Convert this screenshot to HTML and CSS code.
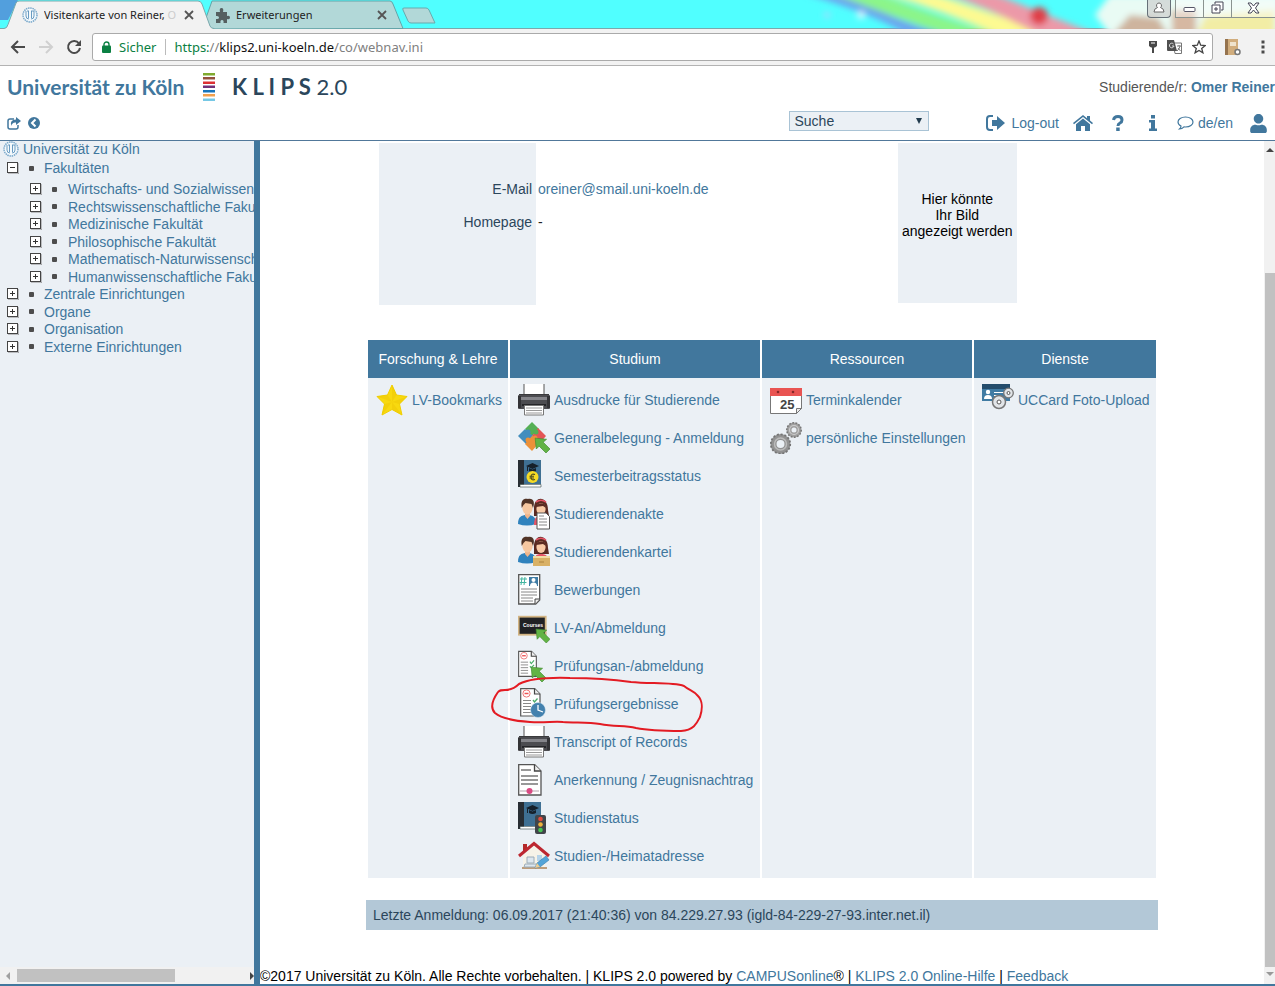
FILE: index.html
```html
<!DOCTYPE html>
<html lang="de">
<head>
<meta charset="utf-8">
<title>Visitenkarte von Reiner</title>
<link rel="stylesheet" href="styles.css">
</head>
<body>
<svg class="defs" aria-hidden="true">
  <defs>
    <symbol id="printer" viewBox="0 0 32 32">
      <path d="M6 11V0h20v11" fill="#fff"/>
      <path d="M6 11V0M26 0v11" stroke="#555" stroke-width="1"/>
      <path d="M1 10h30v3H1z" fill="#3a3a3c"/>
      <rect x="0" y="11" width="32" height="14" rx="1" fill="#4c4c50"/>
      <path d="M0 12h3v12H0zM29 12h3v12h-3z" fill="#333336"/>
      <path d="M3 13h26v3H3z" fill="#85858a"/>
      <path d="M4 20h24v2H4z" fill="#252528"/>
      <path d="M6.500 21.500h19v9.500h-19z" fill="#fff" stroke="#777"/>
      <path d="M8 24h16M8 26.500h16M8 29h16" stroke="#999" stroke-width="1"/>
    </symbol>
    <symbol id="arrow" viewBox="0 0 14 14">
      <path d="M1 1l10 1-3 2.500 6 6L10.500 14l-6-6L2 10.500z" fill="#62b345" stroke="#438c32" stroke-width=".6"/>
    </symbol>
    <symbol id="book" viewBox="0 0 24 28">
      <path d="M0 0h23v24H5v3H0z" fill="#3f7093"/>
      <path d="M0 0h6v27H0z" fill="#272d33"/>
      <path d="M2 24.500h21V27H2z" fill="#fff" stroke="#344"  stroke-width=".6"/>
      <path d="M8 6l6.500-3L21 6l-6.500 3z" fill="#16202a"/>
      <path d="M11 8v3q3.500 2 7 0V8l-3.500 1.500zM9 6.500h1V11H9z" fill="#16202a"/>
    </symbol>
    <symbol id="couple" viewBox="0 0 32 32">
      <path d="M0 26c0-7 3-9 9-9s9 2 9 9q-9 3-18 0z" fill="#2f82bd"/>
      <path d="M7 14h5v4l-2.500 3L7 18z" fill="#eeb58c"/>
      <ellipse cx="9.500" cy="10" rx="5.200" ry="6.500" fill="#f6c7a0"/>
      <path d="M3.800 10C2 1 7 0 10 1c6-1 7 4 5 9l-1.500-4-6-1-2 2z" fill="#503326"/>
      <path d="M16 12c-1-15 14-15 14 0l1 6H16z" fill="#5a2b22"/>
      <path d="M16 27c0-7 2-9 7-9s8 2 8 9z" fill="#e45466"/>
      <ellipse cx="23" cy="11" rx="4.600" ry="6" fill="#f8caa6"/>
      <path d="M18 9c1-4 9-6 10 1l-3-2z" fill="#5a2b22"/>
      <path d="M18 4q5-3.500 10 0" fill="none" stroke="#e45466" stroke-width="1.600"/>
    </symbol>
    <symbol id="exam" viewBox="0 0 24 29">
      <path d="M.7.700h14L20 6v22H.700z" fill="#fff" stroke="#555" stroke-width="1.200"/>
      <path d="M14.500.700V6H20" fill="#eee" stroke="#444" stroke-width="1.200"/>
      <circle cx="6.500" cy="5.500" r="3.600" fill="#fff" stroke="#ee7777"/>
      <path d="M4.500 5.500h4" stroke="#e55" stroke-width="1.500"/>
      <path d="M3 12.500h8M3 15.500h8M3 18.500h8M3 21.500h8M3 24.500h8" stroke="#888"/>
      <path d="M13 12l1.500 2 3-3.500M13 17l1.500 1.500 3-3" fill="none" stroke="#4cae6b" stroke-width="1.300"/>
    </symbol>
    <symbol id="seal" viewBox="0 0 16 16">
      <circle cx="8" cy="8" r="7" fill="#f4f9fc" stroke="#79a8cb" stroke-width="1.500" stroke-dasharray="1.500 .7"/>
      <path d="M4 4v5q0 3 3 3M6.500 4v7M9.500 4v7M12 4v5q0 3-3 3M5 4h2M9 4h3" fill="none" stroke="#5a91bb" stroke-width=".9"/>
    </symbol>
    <symbol id="plus" viewBox="0 0 12 12">
      <path d="M1 12h11V1" fill="none" stroke="#888"/>
      <rect x=".5" y=".5" width="10" height="10" fill="#fff" stroke="#444"/>
      <path d="M3 5.500h5M5.500 3v5" stroke="#333"/>
    </symbol>
    <symbol id="minus" viewBox="0 0 12 12">
      <path d="M1 12h11V1" fill="none" stroke="#888"/>
      <rect x=".5" y=".5" width="10" height="10" fill="#fff" stroke="#444"/>
      <path d="M3 5.500h5" stroke="#333"/>
    </symbol>
    <symbol id="close" viewBox="0 0 10 10"><path d="M1 1l8 8M9 1L1 9" stroke="#555" stroke-width="1.800"/></symbol>
    <filter id="soft"><feGaussianBlur stdDeviation="3"/></filter>
  </defs>
</svg>

<div class="tabstrip">
  <svg class="wallpaper" viewBox="0 0 515 29" width="515" height="29" aria-hidden="true">
    <g filter="url(#soft)">
      <path d="M45-6h45q40 26 100 42h-40Q110 12 45-6z" fill="#6da2ee"/>
      <path d="M75-6h45q50 20 120 42h-50Q130 16 75-6z" fill="#8cf589"/>
      <path d="M125-6h50q50 16 120 42h-55Q180 10 125-6z" fill="#fdfa92"/>
      <path d="M185-6h50q40 16 105 42h-60Q235 10 185-6z" fill="#ec99a8"/>
      <path d="M350-5h170v40H350l-15-20z" fill="#e9fbf4"/>
      <path d="M370 15l28 3 12 20h-60z" fill="#ceb49e"/>
      <path d="M412 10h24v25h-24z" fill="#d6b8a2"/>
      <path d="M445 16l70-6v28h-80z" fill="#f2eda5"/>
      <circle cx="279" cy="16" r="9" fill="#e04048"/>
      <circle cx="67" cy="15" r="3" fill="#a5d9ff"/><circle cx="101" cy="15" r="4" fill="#d5f9ff"/>
    </g>
  </svg>
  <svg class="tabshapes" viewBox="0 0 450 29" width="450" height="29" aria-hidden="true">
    <path d="M0 0h18L8 20H0z" fill="#529fdd"/>
    <path d="M202 29L212 1h178q2 0 3 3l10 24.500z" fill="#b2d8d8" stroke="#63a4a8"/>
    <path d="M0 28.500h4q3 0 4-4L16 3q1-2 3-2h179q3 0 4 3l8 22q1 2.500 4 2.500V30H0z" fill="#f2f2f2" stroke="#7aa9ad"/>
    <path d="M404 8h22q2 0 3 2l6 13h-24q-2 0-3-2l-5-11q-1-2 1-2z" fill="#b2d8d8" stroke="#69a9ad"/>
  </svg>
  <div class="tab tab-active">
    <svg width="16" height="16"><use href="#seal"/></svg>
    <span class="tab-title">Visitenkarte von Reiner, <i>O</i></span>
    <button class="plain" aria-label="Tab schließen"><svg width="10" height="10"><use href="#close"/></svg></button>
  </div>
  <div class="tab">
    <svg width="15" height="15" viewBox="0 0 15 15"><path d="M1 4h4q-1-4 1.500-4T8 4h4v4q3-1 3 1.500T12 11v4H8.500q.5-3-1.500-3t-1.500 3H1v-4q3 .5 3-1.500T1 8z" fill="#555f60"/></svg>
    <span class="tab-title">Erweiterungen</span>
    <button class="plain" aria-label="Tab schließen"><svg width="10" height="10"><use href="#close"/></svg></button>
  </div>
  <div class="window-buttons">
    <button aria-label="Profil"><svg width="12" height="12" viewBox="0 0 12 12"><path d="M6 1a2.500 2.500 0 0 1 1.500 4.500Q11 6.500 11 10H1q0-3.500 3.500-4.500A2.500 2.500 0 0 1 6 1z" fill="#fff" stroke="#666"/></svg></button>
    <span class="window-group">
      <button aria-label="Minimieren"><svg width="13" height="12" viewBox="0 0 13 12"><rect x="1" y="5.500" width="11" height="4" rx="1" fill="#fff" stroke="#556"/></svg></button>
      <button aria-label="Wiederherstellen"><svg width="13" height="13" viewBox="0 0 13 13"><path d="M4 3V1h8v8h-2M1 4h8v8H1zM4 7h2v2H4z" fill="#fff" stroke="#445"/></svg></button>
      <button class="window-close" aria-label="Schließen"><svg width="13" height="12" viewBox="0 0 13 12"><path d="M1 1h3l2.500 3L9 1h3L8.500 6l3.500 5H9L6.500 8 4 11H1l3.500-5z" fill="#fff" stroke="#445"/></svg></button>
    </span>
  </div>
</div>

<div class="toolbar">
  <button class="plain" aria-label="Zurück"><svg width="16" height="14" viewBox="0 0 16 14"><path d="M15 7H2M8 1L2 7l6 6" fill="none" stroke="#4a4a4a" stroke-width="2"/></svg></button>
  <button class="plain" aria-label="Vorwärts"><svg width="16" height="14" viewBox="0 0 16 14"><path d="M1 7h13M8 1l6 6-6 6" fill="none" stroke="#d0d0d0" stroke-width="2"/></svg></button>
  <button class="plain" aria-label="Neu laden"><svg width="16" height="16" viewBox="0 0 16 16"><path d="M13 4.500A6 6 0 1 0 14 9" fill="none" stroke="#4a4a4a" stroke-width="2"/><path d="M15 1v6H9z" fill="#4a4a4a"/></svg></button>
  <div class="address">
    <svg width="9" height="12" viewBox="0 0 9 12"><path d="M2 5V3.500a2.500 2.500 0 0 1 5 0V5" fill="none" stroke="#0b8043" stroke-width="1.400"/><rect y="4.500" width="9" height="7.500" rx="1" fill="#0b8043"/></svg>
    <span class="secure">Sicher</span>
    <span class="url"><span class="scheme">https:</span>//<b>klips2.uni-koeln.de</b>/co/webnav.ini</span>
    <svg width="8" height="13" viewBox="0 0 8 13"><path d="M0 0h8v5l-2 1.500H5V12H3V6.500H2L0 5z" fill="#484848"/><path d="M2 2h4" stroke="#fff"/></svg>
    <svg width="15" height="14" viewBox="0 0 15 14"><path d="M6 3h8.500v10.500H8z" fill="#fff" stroke="#777"/><path d="M0 0h7l3 11H1q-1 0-1-1z" fill="#505050"/><path d="M6.500 4A2.300 2.300 0 1 0 7 6H5" fill="none" stroke="#ddd"/><path d="M10 6h4M12 5v1M13 6q-.5 3-3 5M11 8l2.500 3" fill="none" stroke="#777"/></svg>
    <svg width="14" height="14" viewBox="0 0 14 14"><path d="M7 1l1.700 4.200 4.500.3-3.500 2.900 1.200 4.400L7 10.400l-3.900 2.400 1.200-4.400L.8 5.500l4.500-.3z" fill="none" stroke="#444" stroke-width="1.300"/></svg>
  </div>
  <svg width="16" height="17" viewBox="0 0 16 17"><rect width="13" height="16" fill="#d1ad7d"/><path d="M0 0h3v16H0z" fill="#95734e"/><path d="M5 3h6v4H5z" fill="#efe3cd"/><circle cx="12.500" cy="13" r="2.500" fill="#fff" stroke="#777" stroke-width="1.500"/></svg>
  <button class="plain more" aria-label="Menü"><svg width="4" height="14" viewBox="0 0 4 14"><path d="M.5.500h3v3h-3zM.5 5.500h3v3h-3zM.5 10.500h3v3h-3z" fill="#4a4a4a"/></svg></button>
</div>

<header class="header">
  <div class="brand">
    <span class="uni">Universität zu Köln</span>
    <svg width="12" height="28" viewBox="0 0 12 28" aria-hidden="true"><path d="M0 0h12v2.500H0z" fill="#80aa2f"/><path d="M0 4h12v2.500H0z" fill="#93503c"/><path d="M0 8.500h12V11H0z" fill="#dd3033"/><path d="M0 12.500h12V15H0z" fill="#713279"/><path d="M0 17h12v2.500H0z" fill="#1875bc"/><path d="M0 21h12v2.500H0z" fill="#f2a04d"/><path d="M0 25.500h12V28H0z" fill="#76c8e5"/></svg>
    <span class="klips"><b>K L I P S</b> 2.0</span>
    <span class="user">Studierende/r: <a href="#"><b>Omer Reiner</b></a></span>
  </div>
  <div class="actions">
    <a href="#" aria-label="Öffnen"><svg width="14" height="13" viewBox="0 0 14 13"><path d="M7 2H3Q1 2 1 4v6q0 2 2 2h6q2 0 2-2V8" fill="none" stroke="#41779d" stroke-width="1.500"/><path d="M9 0l5 4-5 4V5.500Q5 5 4.500 9 2 3 9 2.500z" fill="#41779d"/></svg></a>
    <a href="#" class="back" aria-label="Zurück"><svg width="12" height="12" viewBox="0 0 12 12"><circle cx="6" cy="6" r="6" fill="#41779d"/><path d="M7.500 2.500L4 6l3.500 3.500" fill="none" stroke="#fff" stroke-width="2"/></svg></a>
    <select class="search" aria-label="Suche"><option>Suche</option></select>
    <a href="#" class="logout"><svg width="20" height="16" viewBox="0 0 20 16"><path d="M7 1H4Q1 1 1 4v8q0 3 3 3h3" fill="none" stroke="#41779d" stroke-width="2"/><path d="M6 5h5V1l8 7-8 7v-4H6z" fill="#41779d"/></svg>Log-out</a>
    <a href="#" class="home" aria-label="Start"><svg width="20" height="16" viewBox="0 0 20 16"><path d="M0 8l10-8 4 3.200V1h3v4.600L20 8l-1 1.300-9-7.400-9 7.400z" fill="#41779d"/><path d="M10 3.500l7 5.800V16h-5v-5H8v5H3V9.300z" fill="#41779d"/></svg></a>
    <a href="#" class="help" aria-label="Hilfe"><svg width="12" height="16" viewBox="0 0 12 16"><path d="M1.500 5Q2 1.500 6 1.500T10 5q0 2-2 3T6 11" fill="none" stroke="#41779d" stroke-width="3"/><path d="M4.200 12.500h3.500V16H4.200z" fill="#41779d"/></svg></a>
    <a href="#" class="info" aria-label="Info"><svg width="10" height="16" viewBox="0 0 10 16"><path d="M3 0h4v3.500H3zM1 5h6v8.500h2V16H1v-2.500h2v-6H1z" fill="#41779d"/></svg></a>
    <a href="#" class="lang"><svg width="17" height="14" viewBox="0 0 17 14"><path d="M8.500 1C13 1 16 3.200 16 6s-3 5-7.500 5l-1.500-.1Q5 13 2.500 13q1.500-1.200 1.500-3Q1 8.500 1 6c0-2.800 3-5 7.500-5z" fill="none" stroke="#41779d" stroke-width="1.200"/></svg>de/en</a>
    <a href="#" class="person" aria-label="Profil"><svg width="17" height="19" viewBox="0 0 448 512"><path fill="#41779d" d="M224 256c70.700 0 128-57.300 128-128S294.700 0 224 0 96 57.300 96 128s57.300 128 128 128zm89.600 32h-16.700c-22.200 10.200-46.900 16-72.900 16s-50.600-5.800-72.900-16h-16.700C60.200 288 0 348.200 0 422.400V464c0 26.500 21.500 48 48 48h352c26.500 0 48-21.500 48-48v-41.600c0-74.200-60.200-134.400-134.400-134.400z"/></svg></a>
  </div>
</header>

<div class="frames">
  <nav class="sidebar">
    <div class="tree">
      <a href="#" class="root"><svg width="16" height="16"><use href="#seal"/></svg>Universität zu Köln</a>
      <ul>
        <li class="open"><svg width="12" height="12"><use href="#minus"/></svg><a href="#">Fakultäten</a></li>
      </ul>
      <ul class="nested">
        <li><svg width="12" height="12"><use href="#plus"/></svg><a href="#">Wirtschafts- und Sozialwissenschaftliche Fakultät</a></li>
        <li><svg width="12" height="12"><use href="#plus"/></svg><a href="#">Rechtswissenschaftliche Fakultät</a></li>
        <li><svg width="12" height="12"><use href="#plus"/></svg><a href="#">Medizinische Fakultät</a></li>
        <li><svg width="12" height="12"><use href="#plus"/></svg><a href="#">Philosophische Fakultät</a></li>
        <li><svg width="12" height="12"><use href="#plus"/></svg><a href="#">Mathematisch-Naturwissenschaftliche Fakultät</a></li>
        <li><svg width="12" height="12"><use href="#plus"/></svg><a href="#">Humanwissenschaftliche Fakultät</a></li>
      </ul>
      <ul>
        <li><svg width="12" height="12"><use href="#plus"/></svg><a href="#">Zentrale Einrichtungen</a></li>
        <li><svg width="12" height="12"><use href="#plus"/></svg><a href="#">Organe</a></li>
        <li><svg width="12" height="12"><use href="#plus"/></svg><a href="#">Organisation</a></li>
        <li><svg width="12" height="12"><use href="#plus"/></svg><a href="#">Externe Einrichtungen</a></li>
      </ul>
    </div>
    <div class="hscroll">
      <svg width="4" height="8" viewBox="0 0 4 8"><path d="M4 0v8L0 4z" fill="#a0a0a0"/></svg>
      <span class="hthumb"></span>
      <svg width="4" height="8" viewBox="0 0 4 8"><path d="M0 0v8l4-4z" fill="#444"/></svg>
    </div>
  </nav>

  <main class="content">
    <div class="card">
      <section class="profile">
        <div class="labels"><span>E-Mail</span><span>Homepage</span></div>
        <div class="values"><a href="#">oreiner@smail.uni-koeln.de</a><span>-</span></div>
        <div class="photo">Hier könnte<br>Ihr Bild<br>angezeigt werden</div>
      </section>

      <section class="menu">
        <div class="column">
          <h2>Forschung &amp; Lehre</h2>
          <ul>
            <li><a href="#"><svg width="32" height="32" viewBox="0 0 32 32"><path d="M16 1l4.500 10L31 12.500 23.500 20 26 31l-10-5.500L6 31l2.500-11L1 12.500 11.500 11z" fill="#f8d90f" stroke="#f1d000"/><path d="M16 1v17l4.500-7zM31 12.500L16 18l7.500 2zM26 31L16 18v7.500zM6 31l10-13-7.500 2zM1 12.500L16 18l-4.500-7z" fill="#e9bd00" opacity=".3"/></svg>LV-Bookmarks</a></li>
          </ul>
        </div>
        <div class="column">
          <h2>Studium</h2>
          <ul>
            <li><a href="#"><svg width="32" height="32"><use href="#printer"/></svg>Ausdrucke für Studierende</a></li>
            <li><a href="#"><svg width="32" height="32" viewBox="0 0 32 32"><path d="M14 0l7 7-7 7-7-7z" fill="#55af54"/><path d="M7 7l8 7-7 8-8-8z" fill="#438dbe"/><path d="M20 6l8 8-7 8-7-8z" fill="#e35555"/><path d="M14 14l7 7-7 8-7-7z" fill="#ec9139"/><circle cx="18" cy="10" r="2.500" fill="#55af54"/><circle cx="10" cy="10" r="2.500" fill="#438dbe"/><circle cx="10" cy="18" r="2.500" fill="#ec9139"/><circle cx="17" cy="16" r="2.500" fill="#ec9139"/><use href="#arrow" x="16" y="15" width="16" height="16"/></svg>Generalbelegung - Anmeldung</a></li>
            <li><a href="#"><svg width="32" height="32" viewBox="0 0 32 32"><use href="#book" width="24" height="28"/><circle cx="14.500" cy="17" r="6" fill="#f6db25"/><path d="M17 14.500q-4-1.500-4 2.500t4 2.500M11.500 16.200H16M11.500 18H16" fill="none" stroke="#4b4a20" stroke-width="1.100"/></svg>Semesterbeitragsstatus</a></li>
            <li><a href="#"><svg width="32" height="32" viewBox="0 0 32 32"><use href="#couple" width="32" height="32"/><path d="M19 15h9l3.500 3.500V31H19z" fill="#fff" stroke="#555"/><path d="M21 18h5M21 21h8M21 24h8M21 27h8" stroke="#888"/></svg>Studierendenakte</a></li>
            <li><a href="#"><svg width="32" height="32" viewBox="0 0 32 32"><use href="#couple" width="32" height="32"/><path d="M15 21h17v9H15z" fill="#d9b166"/><path d="M15 20h17v2H15z" fill="#f2dda4"/><path d="M21 26h5" stroke="#ac823c"/></svg>Studierendenkartei</a></li>
            <li><a href="#"><svg width="32" height="32" viewBox="0 0 32 32"><path d="M.7.700h21V26l-4 4H.700z" fill="#fff" stroke="#555" stroke-width="1.300"/><path d="M21.500 25H17v5" fill="#eee" stroke="#444"/><path d="M4 3L3 11M7 3L6 11M2 5h7M1.500 8.500h7" stroke="#42b5a0"/><path d="M11 3h9v9h-9z" fill="#3e7ba4"/><circle cx="15.500" cy="6" r="2" fill="#fff"/><path d="M12 12q0-3.500 3.500-3.500T19 12z" fill="#fff"/><path d="M3 15h16M3 18h16M3 21h16M3 24h12M3 27h12" stroke="#888"/></svg>Bewerbungen</a></li>
            <li><a href="#"><svg width="32" height="32" viewBox="0 0 32 32"><rect x=".7" y="4.700" width="27" height="18" fill="#202124" stroke="#d2b483" stroke-width="1.800"/><text x="5" y="15" class="tiny">Courses</text><use href="#arrow" x="17" y="16" width="15" height="15"/></svg>LV-An/Abmeldung</a></li>
            <li><a href="#"><svg width="32" height="32" viewBox="0 0 32 32"><use href="#exam" width="22" height="28"/><use href="#arrow" x="12" y="16" width="16" height="16"/></svg>Prüfungsan-/abmeldung</a></li>
            <li class="marked"><a href="#"><svg width="32" height="32" viewBox="0 0 32 32"><use href="#exam" x="2" width="24" height="29"/><circle cx="20" cy="22" r="7.500" fill="#4381ae" stroke="#dcebf4" stroke-width=".5"/><path d="M20 17v5l5 2" fill="none" stroke="#fff" stroke-width="1.300"/></svg>Prüfungsergebnisse</a>
              <svg class="scribble" viewBox="488 673 220 62" width="220" height="62" aria-hidden="true"><path d="M498 692C491 702 491 709 495 713C502 719 515 721 530 722C545 723 554 721 563 722C575 723 588 722 600 724C616 727 624 725 636 728C651 731 673 731 681 731C694 730 697 723 700 717C703 708 702 700 698 696C693 690 690 691 684 686C672 682 650 684 631 682C610 679 590 678 570 678C540 677 527 680 519 684C514 689 509 690 505 690C501 690 500 690 498 692" fill="none" stroke="#e31b23" stroke-width="2" stroke-linejoin="round"/></svg>
            </li>
            <li><a href="#"><svg width="32" height="32"><use href="#printer"/></svg>Transcript of Records</a></li>
            <li><a href="#"><svg width="32" height="32" viewBox="0 0 32 32"><path d="M.7.700h16L23 7v24H.700z" fill="#fff" stroke="#555" stroke-width="1.300"/><path d="M16.500.700V7H23" fill="#eee" stroke="#444" stroke-width="1.300"/><path d="M3 6h10M3 12h17M3 16h17M3 20h17" stroke="#777" stroke-width="1.400"/><path d="M2 27h19" stroke="#b5a1ac"/><circle cx="11.500" cy="27" r="3" fill="#d94a83"/></svg>Anerkennung / Zeugnisnachtrag</a></li>
            <li><a href="#"><svg width="32" height="32" viewBox="0 0 32 32"><use href="#book" width="24" height="28"/><rect x="17" y="13" width="11" height="19" rx="2" fill="#41454a"/><circle cx="22.500" cy="17" r="2.300" fill="#e14b3f"/><circle cx="22.500" cy="22.500" r="2.300" fill="#efb33c"/><circle cx="22.500" cy="28" r="2.300" fill="#45c454"/></svg>Studienstatus</a></li>
            <li><a href="#"><svg width="32" height="32" viewBox="0 0 32 32"><path d="M5 15L16 6l11 9v13H5z" fill="#f6f3e8"/><path d="M4 27h25v2H4z" fill="#bd9d7b"/><path d="M5 4h4v6l-4 3z" fill="#b42929"/><path d="M1 16L16 3.500 31 16" fill="none" stroke="#bd2730" stroke-width="3"/><path d="M9 17h7v6H9zM7 24h11l2 3H6z" fill="#dce7ef" stroke="#9cacb8"/><path d="M19 15h5v6h-5z" fill="#b5d4ea"/><path d="M17 28l2-5 9-7 3 4-9 7z" fill="#53a4d8" stroke="#377ba9" stroke-width=".6"/><path d="M17 28l2-5 3 4z" fill="#efcc93"/></svg>Studien-/Heimatadresse</a></li>
          </ul>
        </div>
        <div class="column">
          <h2>Ressourcen</h2>
          <ul>
            <li><a href="#"><svg width="32" height="32" viewBox="0 0 32 32"><path d="M.5 4.500h31v20l-5 5H.500z" fill="#fff" stroke="#777"/><path d="M0 4h32v8H0z" fill="#e95452"/><circle cx="8" cy="8" r="1.300" fill="#842828"/><circle cx="23" cy="8" r="1.300" fill="#842828"/><path d="M31.500 24.500h-5v5z" fill="#eee" stroke="#777"/><text x="10" y="25" class="day">25</text></svg>Terminkalender</a></li>
            <li><a href="#"><svg width="32" height="32" viewBox="0 0 32 32"><circle cx="10.500" cy="22" r="7" fill="none" stroke="#929292" stroke-width="6"/><circle cx="10.500" cy="22" r="9.700" fill="none" stroke="#757575" stroke-width="1.800" stroke-dasharray="2 1.800"/><circle cx="10.500" cy="22" r="6" fill="none" stroke="#bbb" stroke-width="1.500"/><circle cx="24" cy="8" r="5" fill="none" stroke="#a0a0a0" stroke-width="5"/><circle cx="24" cy="8" r="7.200" fill="none" stroke="#777" stroke-width="1.500" stroke-dasharray="1.700 1.500"/><circle cx="24" cy="8" r="4.500" fill="none" stroke="#ccc" stroke-width="1.200"/></svg>persönliche Einstellungen</a></li>
          </ul>
        </div>
        <div class="column">
          <h2>Dienste</h2>
          <ul>
            <li><a href="#"><svg width="32" height="32" viewBox="0 0 32 32"><path d="M0 0h28v17H0z" fill="#407ba3"/><path d="M0 0h28v5H0z" fill="#244c6b"/><circle cx="6" cy="8" r="2.200" fill="#fff"/><path d="M2 15q0-4 4-4t4 4zM12 8h10v1H12zM12 11h7v1h-7z" fill="#fff"/><circle cx="17" cy="18" r="6.500" fill="#e2e5e8" stroke="#777" stroke-width="1.500"/><circle cx="17" cy="18" r="2" fill="#fff" stroke="#555"/><circle cx="26.500" cy="9" r="4.800" fill="#e2e5e8" stroke="#777" stroke-width="1.300"/><circle cx="26.500" cy="9" r="1.500" fill="#fff" stroke="#555"/></svg>UCCard Foto-Upload</a></li>
          </ul>
        </div>
      </section>
      <p class="last-login">Letzte Anmeldung: 06.09.2017 (21:40:36) von 84.229.27.93 (igld-84-229-27-93.inter.net.il)</p>
    </div>
    <footer>©2017 Universität zu Köln. Alle Rechte vorbehalten. | KLIPS 2.0 powered by <a href="#">CAMPUSonline</a>® | <a href="#">KLIPS 2.0 Online-Hilfe</a> | <a href="#">Feedback</a></footer>
  </main>
  <div class="vscroll">
    <svg width="8" height="4" viewBox="0 0 8 4"><path d="M0 4h8L4 0z" fill="#444"/></svg>
    <span class="vthumb"></span>
    <svg width="8" height="4" viewBox="0 0 8 4"><path d="M0 0h8L4 4z" fill="#999"/></svg>
  </div>
</div>
</body>
</html>
```
FILE: styles.css
```css
* { box-sizing: border-box; }
body {
  margin: 0;
  height: 100vh;
  display: flex;
  flex-direction: column;
  overflow: hidden;
  font: 14px/18px "Liberation Sans", Arial, sans-serif;
  color: #222;
  background: #fff;
}
a { color: #41779d; text-decoration: none; }
ul { list-style: none; margin: 0; padding: 0; }
svg { flex: none; display: block; }
.defs { position: absolute; width: 0; height: 0; }
.plain { border: 0; padding: 0; background: none; }

/* browser window */
.tabstrip {
  position: relative;
  flex: none;
  display: flex;
  height: 29px;
  padding-left: 22px;
  background: #50ffff;
  border-bottom: 1px solid #7aa9ad;
  font: 12px/28px "Noto Sans", sans-serif;
}
.wallpaper { position: absolute; right: 0; top: 0; }
.tabshapes { position: absolute; left: 0; top: 0; }
.tab {
  position: relative;
  display: flex;
  align-items: center;
  gap: 6px;
  width: 193px;
  padding-right: 21px;
  padding-top: 2px;
}
.tab-title { flex: 1; min-width: 0; overflow: hidden; white-space: nowrap; font-size: 11px; }
.tab-title i { font-style: normal; color: #ccc; }
.window-buttons {
  position: relative;
  display: flex;
  gap: 4px;
  margin-left: auto;
  height: 18px;
}
.window-buttons button {
  width: 24px;
  padding: 0 0 2px;
  display: flex;
  align-items: center;
  justify-content: center;
  border: 1px solid #667078;
  border-top: 0;
  border-radius: 0 0 4px 4px;
  background: #c8c8c899;
}
.window-group { display: flex; }
.window-group button { width: 28px; border-radius: 0; background: #ffffff66; border-right: 0; border-color: #8a9390; }
.window-group .window-close { width: 44px; }
.toolbar {
  flex: none;
  display: flex;
  align-items: center;
  gap: 12px;
  height: 37px;
  padding: 0 10px;
  background: #f2f2f2;
  border-bottom: 1px solid #b3b3b3;
}
.address {
  flex: 1;
  display: flex;
  align-items: center;
  gap: 10px;
  height: 28px;
  margin-left: -2px;
  padding: 0 6px 0 9px;
  border: 1px solid #aaa;
  border-radius: 3px;
  background: #fff;
  font: 13px/18px "Noto Sans", sans-serif;
}
.more { margin-left: 8px; }
.secure, .scheme { color: #0b8043; }
.secure { margin-left: -2px; padding-right: 9px; border-right: 1px solid #bbb; line-height: 16px; }
.url { flex: 1; margin-left: -2px; color: #808080; }
.url b { font-weight: 400; color: #111; }

/* page header */
.header { flex: none; height: 75px; border-bottom: 1px solid #51789a; overflow: hidden; }
.brand { display: flex; align-items: center; height: 42px; padding-left: 7px; white-space: nowrap; }
.uni, .klips { font: 700 21px/24px Lato, sans-serif; color: #41779d; }
.uni { width: 196px; }
.klips { margin-left: 17px; color: #2b465b; font-weight: 400; font-size: 22px; }
.user { margin-left: auto; color: #555; }
.actions { display: flex; align-items: center; height: 30px; padding: 0 8px 0 7px; }
.actions a { display: flex; align-items: center; gap: 5px; }
.back { margin-left: 7px; }
.search {
  appearance: none;
  width: 140px;
  height: 20px;
  margin: 0 57px 4px auto;
  padding: 0 4px;
  border: 1px solid #a9c3d5;
  border-radius: 0;
  color: #2b465b;
  font: 14px/18px "Liberation Sans", Arial, sans-serif;
  background: #ebf0f5 url("data:image/svg+xml,%3Csvg xmlns='http://www.w3.org/2000/svg' width='6' height='6'%3E%3Cpath d='M0 0h6L3 6z' fill='%23223b4d'/%3E%3C/svg%3E") no-repeat right 6px center;
}
.home { margin-left: 14px; }
.help { margin-left: 19px; }
.info { margin-left: 24px; }
.actions .lang { margin-left: 19px; gap: 4px; }
.person { margin-left: 17px; }

/* frames */
.frames { flex: 1; min-height: 0; display: flex; border-bottom: 2px solid #41779d; }
.sidebar {
  flex: none;
  display: flex;
  flex-direction: column;
  width: 260px;
  border-right: 6px solid #41779d;
  background: #ebf0f5;
}
.tree { flex: 1; overflow: hidden; white-space: nowrap; }
.root { display: flex; align-items: center; gap: 4px; height: 16px; padding-left: 3px; }
.tree li { display: flex; align-items: center; height: 18px; padding-left: 7px; }
.tree li:nth-child(even) { height: 17px; }
.tree .open { height: 23px; padding-bottom: 1px; }
.tree .nested li { padding-left: 30px; }
.tree li a { display: flex; align-items: center; }
.tree li a::before { content: ""; width: 5px; height: 5px; margin: 0 10px; border-radius: 1px; background: #4d4d4d; }
.nested li a::before { margin-right: 11px; }
.hscroll { display: flex; align-items: center; justify-content: space-between; height: 17px; padding: 0 0 0 6px; background: #f1f1f1; }
.hthumb { width: 158px; height: 13px; margin: 0 auto 0 7px; background: #c1c1c1; }
.content { flex: 1; min-width: 0; display: flex; flex-direction: column; overflow: hidden; }
.card { flex: 1; width: 100%; max-width: 792px; margin: 0 auto; }
.profile { display: flex; padding: 2px 141px 0 13px; }
.labels, .values { display: flex; flex-direction: column; gap: 15px; padding-top: 37px; }
.labels { width: 157px; height: 162px; padding-right: 4px; background: #ebf0f5; align-items: flex-end; color: #2b465b; }
.values { flex: 1; padding-left: 2px; }
.photo {
  display: flex;
  align-items: center;
  width: 119px;
  height: 160px;
  padding: 0 4px 16px;
  text-align: center;
  line-height: 16px;
  white-space: nowrap;
  background: #ebf0f5;
  color: #000;
}
.menu {
  display: grid;
  grid-template-columns: 140fr 250fr 210fr 182fr;
  gap: 2px;
  margin: 35px 2px 0;
}
.column { background: #ebf0f5; }
.column h2 { margin: 0; font-size: 14px; line-height: 38px; font-weight: 400; text-align: center; color: #fff; background: #41779d; }
.column ul { padding: 3px 0 3px 8px; }
.column li { position: relative; }
.column a { display: flex; align-items: center; gap: 4px; height: 38px; white-space: nowrap; }
.scribble { position: absolute; left: -30px; top: -12px; pointer-events: none; z-index: 1; }
.tiny { font: 700 5px "Liberation Sans", sans-serif; fill: #fff; }
.day { font: 700 13px "Liberation Sans", sans-serif; fill: #444; }
.last-login { margin: 22px 0 0; padding: 6px 7px; background: #b3c8d7; color: #2b465b; }
footer { height: 16px; line-height: 16px; white-space: nowrap; color: #000; }
.vscroll { flex: none; display: flex; flex-direction: column; align-items: center; width: 11px; padding: 7px 0 8px 1px; background: #f1f1f1; }
.vthumb { flex: 1; width: 10px; margin: 121px 0 5px; background: #c1c1c1; }
```
